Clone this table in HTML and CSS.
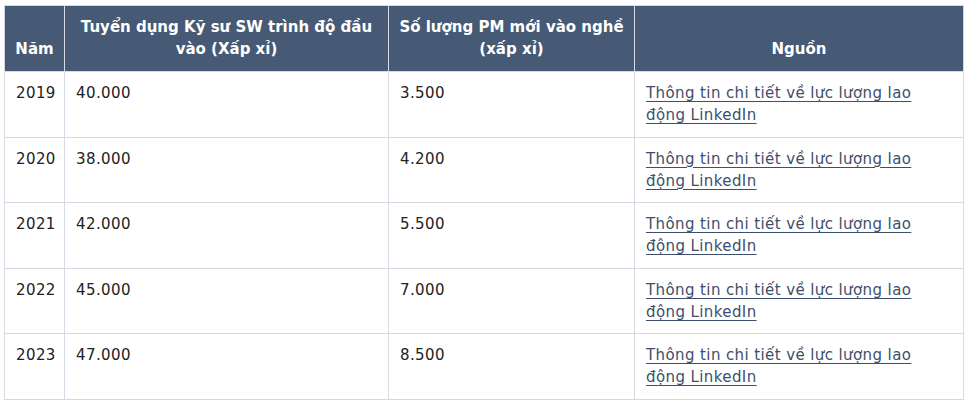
FILE: index.html
```html
<!DOCTYPE html>
<html lang="vi">
<head>
<meta charset="utf-8">
<link rel="stylesheet" href="styles.css">
</head>
<body>
<table class="data">
  <colgroup>
    <col class="c1"><col class="c2"><col class="c3"><col class="c4">
  </colgroup>
  <thead>
    <tr>
      <th>Năm</th>
      <th>Tuyển dụng Kỹ sư SW trình độ đầu vào (Xấp xỉ)</th>
      <th>Số lượng PM mới vào nghề (xấp xỉ)</th>
      <th>Nguồn</th>
    </tr>
  </thead>
  <tbody>
    <tr><td>2019</td><td>40.000</td><td>3.500</td><td class="src"><a href="#">Thông tin chi tiết về lực lượng lao động LinkedIn</a></td></tr>
    <tr><td>2020</td><td>38.000</td><td>4.200</td><td class="src"><a href="#">Thông tin chi tiết về lực lượng lao động LinkedIn</a></td></tr>
    <tr><td>2021</td><td>42.000</td><td>5.500</td><td class="src"><a href="#">Thông tin chi tiết về lực lượng lao động LinkedIn</a></td></tr>
    <tr><td>2022</td><td>45.000</td><td>7.000</td><td class="src"><a href="#">Thông tin chi tiết về lực lượng lao động LinkedIn</a></td></tr>
    <tr><td>2023</td><td>47.000</td><td>8.500</td><td class="src"><a href="#">Thông tin chi tiết về lực lượng lao động LinkedIn</a></td></tr>
  </tbody>
</table>
</body>
</html>
```
FILE: styles.css
```css
html, body { background: #fff; }
body {
  margin: 5px 0 0 4px;
  font-family: "DejaVu Sans", "Open Sans", sans-serif;
  font-size: 15px;
  color: #222;
}
.data {
  border-collapse: collapse;
  table-layout: fixed;
  width: 959px;
}
.c1 { width: 60px; }
.c2 { width: 324px; }
.c3 { width: 246px; }
.c4 { width: 329px; }
.data th, .data td {
  border: 1px solid #d6d8e3;
  line-height: 22px;
}
.data th {
  background: #465a75;
  color: #fff;
  font-weight: 700;
  font-size: 15px;
  text-align: center;
  vertical-align: bottom;
  padding: 0 8px 11px;
  height: 54px;
}
.data td {
  vertical-align: top;
  padding: 10px 11px 0;
  height: 54.6px;
  letter-spacing: 0.4px;
}
.data td.src { padding-right: 20px; }
.data a {
  color: #3d4f6b;
  text-decoration: underline;
  text-underline-offset: 3px;
}
```
